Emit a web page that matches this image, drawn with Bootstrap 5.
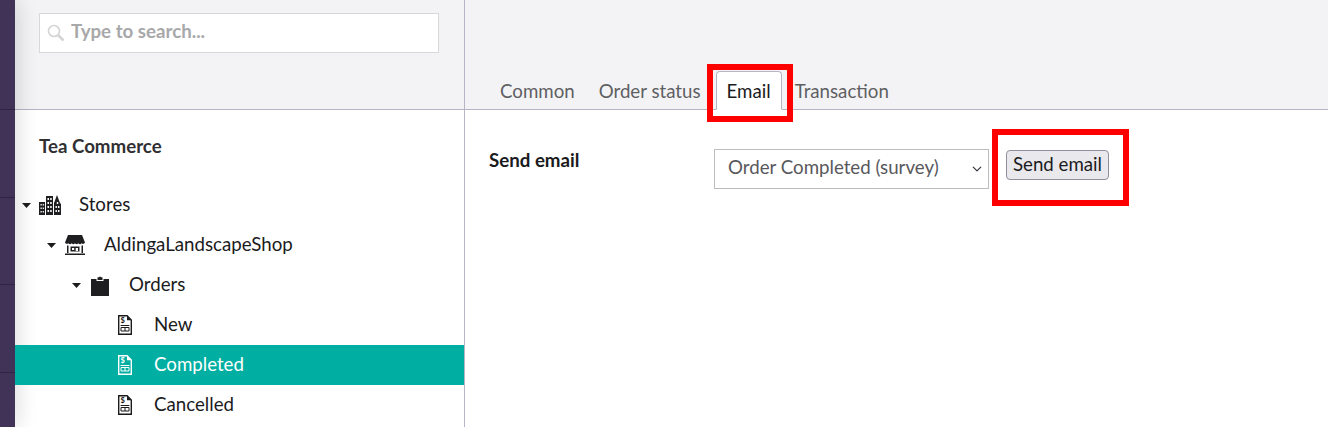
<!DOCTYPE html>
<html lang="en">
<head>
    <meta charset="UTF-8">
    <meta name="viewport" content="width=device-width, initial-scale=1.0">
    <title>Tea Commerce - Send email</title>
    <link href="https://cdn.jsdelivr.net/npm/bootstrap@5.3.0/dist/css/bootstrap.min.css" rel="stylesheet">
    <style>
        html, body { height: 100%; }
        body {
            font-family: Lato, "Liberation Sans", sans-serif;
            font-size: 18.7px;
            color: #1b1b1d;
            overflow: hidden;
            position: relative;
        }
        .app-shell { height: 427px; }
        /* left purple rail */
        .rail {
            width: 15px;
            flex: none;
            background: #413357;
            box-shadow: 0 0 22px rgba(0, 0, 0, .2);
            position: relative;
            z-index: 2;
        }
        .rail-item { height: 87.5px; border-bottom: 1px solid #2f2543; }
        .rail-item:first-child { height: 110px; }
        .side-panel {
            width: 450px;
            flex: none;
            border-right: 1px solid #b7b4c6;
        }
        .top-bar {
            height: 110px;
            background: #f3f3f5;
            border-bottom: 1px solid #b7b4c6;
        }
        .side-panel .top-bar { padding: 13px 25px 0 24px; }
        .search-box { position: relative; }
        .search-box svg { position: absolute; left: 8px; top: 11px; }
        .search-input.form-control {
            height: 40px;
            padding: 0 10px 4px 31px;
            border: 1px solid #d8d8da;
            border-radius: 0;
            font-size: 18.7px;
            font-weight: 700;
        }
        .search-input::placeholder { color: #a8a8aa; opacity: 1; }
        .section-name {
            font-weight: 700;
            color: #303033;
            line-height: 22px;
            padding: 25px 0 28px 24px;
        }
        .tree-row {
            height: 40px;
            position: relative;
            z-index: 3;
        }
        .tree-row.level-0 { padding-left: 7px; }
        .tree-row.level-1 { padding-left: 32px; }
        .tree-row.level-2 { padding-left: 57px; }
        .tree-row.level-3 { padding-left: 82px; }
        .tree-row.is-active { background: #00aea2; color: #fff; }
        .row-label { margin-bottom: 2px; }
        .caret-slot { width: 9px; flex: none; margin-right: 8px; }
        .icon-slot { width: 22px; flex: none; margin-right: 18px; }
        .icon-slot svg, .caret-slot svg { display: block; margin: 0 auto; }
        .main-panel { min-width: 0; }
        .main-panel .top-bar { border-bottom: 0; background: #f3f3f5; }
        .tab-strip.nav-tabs {
            width: 100%;
            padding-left: 23px;
            border-bottom: 1px solid #b7b4c6;
        }
        .tab-strip .nav-link {
            color: #5f5f63;
            padding: 7px 11px 6px;
            line-height: 24px;
            margin-bottom: -1px;
            border: 1px solid transparent;
            border-radius: 4px 4px 0 0;
        }
        .tab-strip .nav-link.active {
            color: #1b1b1d;
            background: #fff;
            padding-left: 10px;
            padding-right: 10px;
            border-color: #b7b4c6 #b7b4c6 #fff;
            margin: 0 1px -1px 3px;
        }
        .form-area { padding: 39px 0 0 24px; }
        .field-name {
            width: 225px;
            flex: none;
            font-weight: 700;
            line-height: 22px;
        }
        .mail-select.form-select {
            width: 275px;
            height: 40px;
            padding: 0 30px 3px 13px;
            font-size: 18.7px;
            color: #58585c;
            border: 1px solid #bcbcbe;
            border-radius: 0;
            background-position: right 4px center;
            background-size: 14px 10px;
        }
        .send-btn.btn {
            margin: 1px 0 0 17px;
            height: 30px;
            width: 103px;
            padding: 0 0 2px;
            font-size: 18.7px;
            line-height: 24px;
            color: #1b1b1d;
            background: #e9e9ed;
            border: 1px solid #8f8f9d;
            border-radius: 4px;
        }
        /* red annotation boxes drawn over the screenshot */
        .note-box {
            position: absolute;
            border: 6px solid #fe0000;
            pointer-events: none;
            z-index: 5;
        }
        .note-tab { left: 707px; top: 64px; width: 86px; height: 58px; }
        .note-btn { left: 992px; top: 129px; width: 137px; height: 77px; }
    </style>
</head>
<body>

<div class="app-shell d-flex">
    <div class="rail">
        <div class="rail-item"></div>
        <div class="rail-item"></div>
        <div class="rail-item"></div>
        <div class="rail-item"></div>
    </div>

    <div class="side-panel d-flex flex-column">
        <div class="top-bar">
            <div class="search-box">
                <svg width="18" height="18" viewBox="0 0 18 18" fill="none" stroke="#d4d4d6">
                    <circle cx="7" cy="7" r="5.5" stroke-width="1.6"/>
                    <path d="M11 11l5.500 5.500" stroke-width="2.600"/>
                </svg>
                <input class="form-control search-input" type="text" placeholder="Type to search...">
            </div>
        </div>
        <div class="section-name">Tea Commerce</div>

        <div class="tree-row level-0 d-flex align-items-center">
            <span class="caret-slot"><svg width="9" height="5" viewBox="0 0 9 5"><path d="M0 0h9L4.500 5z" fill="currentColor"/></svg></span>
            <span class="icon-slot">
                <svg width="22" height="20" viewBox="0 0 22 20" fill="#1f1f21">
                    <path d="M0 7h6v13H0zM7 1h7v19H7zM15 8l3-8 3 8 1 1v11h-7z"/>
                    <g fill="#fff">
                        <path d="M1.500 9h1.200v1.600H1.500zM3.700 9h1.200v1.600H3.700zM1.500 12.500h1.200v1.600H1.500zM3.700 12.500h1.200v1.600H3.700zM1.500 16h1.200v1.600H1.500zM3.700 16h1.200v1.600H3.700z"/>
                        <path d="M8.500 3h1.500v2H8.500zM11.200 3h1.500v2h-1.500zM8.500 7h1.500v2H8.500zM11.200 7h1.500v2h-1.500zM8.500 11h1.500v2H8.500zM11.200 11h1.500v2h-1.500zM8.500 15h1.500v2H8.500zM11.200 15h1.500v2h-1.500z"/>
                        <path d="M17.800 7h1.400v2h-1.400zM16.500 11h1.400v2h-1.400zM19 11h1.400v2H19zM16.500 15h1.400v2h-1.400zM19 15h1.400v2H19z"/>
                    </g>
                </svg>
            </span>
            <span class="row-label">Stores</span>
        </div>
        <div class="tree-row level-1 d-flex align-items-center">
            <span class="caret-slot"><svg width="9" height="5" viewBox="0 0 9 5"><path d="M0 0h9L4.500 5z" fill="currentColor"/></svg></span>
            <span class="icon-slot">
                <svg width="20" height="20" viewBox="0 0 20 20" fill="#1f1f21">
                    <path d="M3 0h14l3 7.500a2 2 0 0 1-3.300.8 2.300 2.300 0 0 1-3.400 0 2.300 2.300 0 0 1-3.300 0 2.300 2.300 0 0 1-3.300 0 2.300 2.300 0 0 1-3.400 0A2 2 0 0 1 0 7.500z"/>
                    <path d="M2 10.500h1.500V18H2zM16.500 10.500H18V18h-1.500zM0 18.500h20V20H0z"/>
                    <path d="M5.500 11.500h9v5h-9zm1.500 1.500v2h2.200v-2zm3.700 0v3h2.300v-3z" fill-rule="evenodd"/>
                </svg>
            </span>
            <span class="row-label">AldingaLandscapeShop</span>
        </div>
        <div class="tree-row level-2 d-flex align-items-center">
            <span class="caret-slot"><svg width="9" height="5" viewBox="0 0 9 5"><path d="M0 0h9L4.500 5z" fill="currentColor"/></svg></span>
            <span class="icon-slot">
                <svg width="18" height="21" viewBox="0 0 18 21" fill="#1f1f21">
                    <path d="M0 4h5.500V6h7V4H18v17H0z"/>
                    <path d="M6.500 5V2.200h1.600a1 1 0 0 1 1.900 0h1.500V5z"/>
                </svg>
            </span>
            <span class="row-label">Orders</span>
        </div>
        <div class="tree-row level-3 d-flex align-items-center">
            <span class="caret-slot"></span>
            <span class="icon-slot">
                <svg width="14" height="20" viewBox="0 0 14 20" fill="none" stroke="currentColor">
                    <path d="M.7.7h8.400l4.200 4.400v14.200H.7z" stroke-width="1.400"/>
                    <path d="M9 .7v4.600h4.300z" fill="currentColor" stroke="none"/>
                    <text x="2.400" y="8" font-family="Lato, sans-serif" font-size="7.500" font-weight="700" fill="currentColor" stroke="none">$</text>
                    <path d="M2.600 10.500h8.800M3 12.500h8v3.500H3zM7 12.500v3.500" stroke-width="1"/>
                </svg>
            </span>
            <span class="row-label">New</span>
        </div>
        <div class="tree-row level-3 is-active d-flex align-items-center">
            <span class="caret-slot"></span>
            <span class="icon-slot">
                <svg width="14" height="20" viewBox="0 0 14 20" fill="none" stroke="currentColor">
                    <path d="M.7.7h8.400l4.200 4.400v14.200H.7z" stroke-width="1.400"/>
                    <path d="M9 .7v4.600h4.300z" fill="currentColor" stroke="none"/>
                    <text x="2.400" y="8" font-family="Lato, sans-serif" font-size="7.500" font-weight="700" fill="currentColor" stroke="none">$</text>
                    <path d="M2.600 10.500h8.800M3 12.500h8v3.500H3zM7 12.500v3.500" stroke-width="1"/>
                </svg>
            </span>
            <span class="row-label">Completed</span>
        </div>
        <div class="tree-row level-3 d-flex align-items-center">
            <span class="caret-slot"></span>
            <span class="icon-slot">
                <svg width="14" height="20" viewBox="0 0 14 20" fill="none" stroke="currentColor">
                    <path d="M.7.7h8.400l4.200 4.400v14.200H.7z" stroke-width="1.400"/>
                    <path d="M9 .7v4.600h4.300z" fill="currentColor" stroke="none"/>
                    <text x="2.400" y="8" font-family="Lato, sans-serif" font-size="7.500" font-weight="700" fill="currentColor" stroke="none">$</text>
                    <path d="M2.600 10.500h8.800M3 12.500h8v3.500H3zM7 12.500v3.500" stroke-width="1"/>
                </svg>
            </span>
            <span class="row-label">Cancelled</span>
        </div>
    </div>

    <div class="main-panel flex-grow-1 d-flex flex-column">
        <div class="top-bar d-flex align-items-end">
            <ul class="nav nav-tabs tab-strip">
                <li class="nav-item"><a class="nav-link" href="#">Common</a></li>
                <li class="nav-item"><a class="nav-link" href="#">Order status</a></li>
                <li class="nav-item"><a class="nav-link active" href="#">Email</a></li>
                <li class="nav-item"><a class="nav-link" href="#">Transaction</a></li>
            </ul>
        </div>
        <div class="form-area d-flex align-items-start">
            <div class="field-name">Send email</div>
            <select class="form-select mail-select">
                <option>Order Completed (survey)</option>
            </select>
            <button type="button" class="btn send-btn">Send email</button>
        </div>
    </div>
</div>

<div class="note-box note-tab"></div>
<div class="note-box note-btn"></div>

</body>
</html>
